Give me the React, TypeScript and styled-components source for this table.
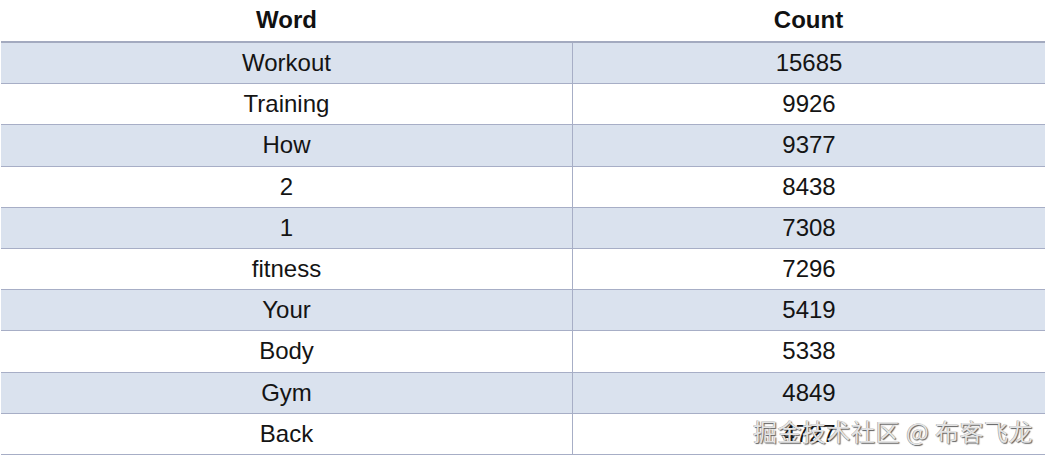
import React from "react";
import styled, { createGlobalStyle } from "styled-components";

const Global = createGlobalStyle`
  html, body { margin: 0; padding: 0; background: #ffffff; }
  body { font-family: "Liberation Sans", Arial, sans-serif; }
`;

const Page = styled.div`
  position: relative;
  width: 1048px;
  height: 457px;
  overflow: hidden;
  padding-left: 1px;
  box-sizing: border-box;
`;

const Table = styled.div`
  width: 1044px;
  display: flex;
  flex-direction: column;
`;

const HeaderRow = styled.div`
  display: grid;
  grid-template-columns: 571px 1fr;
  height: 43px;
  box-sizing: border-box;
  border-bottom: 2px solid #a3aabf;
`;

const HeaderCell = styled.div`
  display: flex;
  align-items: center;
  justify-content: center;
  font-weight: 700;
  font-size: 24px;
  color: #111111;
  padding-bottom: 2px;
`;

const Row = styled.div<{ $band: boolean }>`
  display: grid;
  grid-template-columns: 571px 1fr;
  height: 41.2px;
  box-sizing: border-box;
  border-bottom: 1.5px solid #a7aec6;
  background: ${(p) => (p.$band ? "#dae2ee" : "#ffffff")};
`;

const Cell = styled.div<{ $divider?: boolean }>`
  display: flex;
  align-items: center;
  justify-content: center;
  font-size: 24px;
  color: #141414;
  border-left: ${(p) => (p.$divider ? "1.5px solid #a7aec6" : "none")};
`;

const Watermark = styled.div`
  position: absolute;
  right: 15px;
  bottom: 9px;
  font-family: "Noto Sans CJK SC", "Liberation Sans", sans-serif;
  font-size: 24px;
  letter-spacing: 0.5px;
  color: #e4e4e4;
  text-shadow: 1px 1px 1px rgba(40, 40, 40, 0.75), -0.5px -0.5px 0.5px rgba(60, 60, 60, 0.5);
  white-space: nowrap;
`;

const data: [string, number][] = [
  ["Workout", 15685],
  ["Training", 9926],
  ["How", 9377],
  ["2", 8438],
  ["1", 7308],
  ["fitness", 7296],
  ["Your", 5419],
  ["Body", 5338],
  ["Gym", 4849],
  ["Back", 4727],
];

export default function App() {
  return (
    <>
      <Global />
      <Page>
        <Table>
          <HeaderRow>
            <HeaderCell>Word</HeaderCell>
            <HeaderCell>Count</HeaderCell>
          </HeaderRow>
          {data.map(([w, c], i) => (
            <Row key={w} $band={i % 2 === 0}>
              <Cell>{w}</Cell>
              <Cell $divider>{c}</Cell>
            </Row>
          ))}
        </Table>
        <Watermark>掘金技术社区 @ 布客飞龙</Watermark>
      </Page>
    </>
  );
}
